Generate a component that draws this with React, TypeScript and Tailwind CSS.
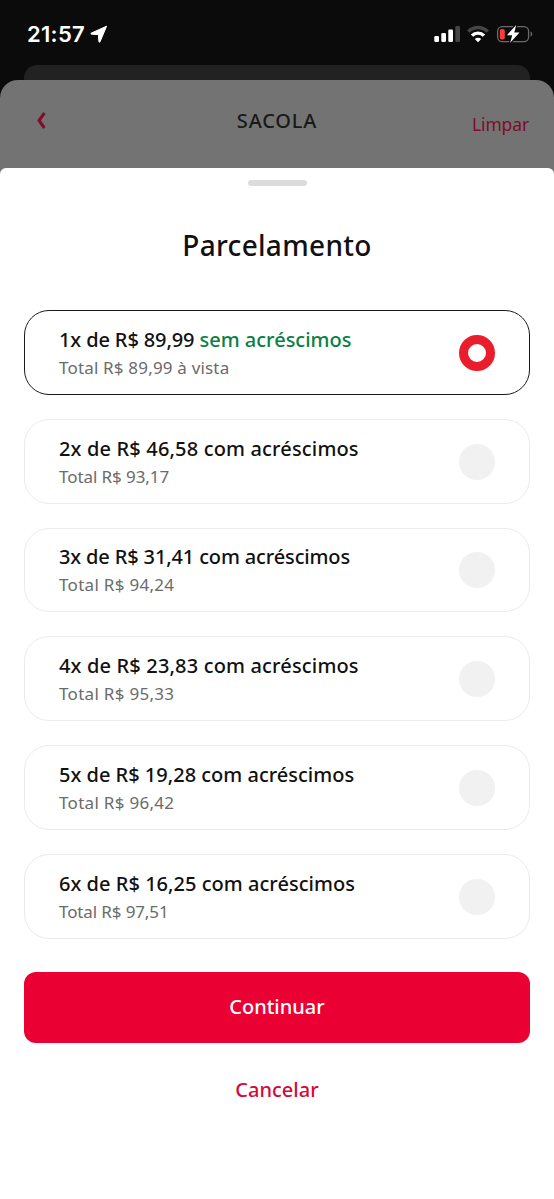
const installments = [
  { price: "1x de R$ 89,99", note: "sem acréscimos", total: "Total R$ 89,99 à vista", free: true, titleTracking: "tracking-[-0.12px]", totalTracking: "tracking-[0.18px]" },
  { price: "2x de R$ 46,58", note: "com acréscimos", total: "Total R$ 93,17", titleTracking: "tracking-[0.16px]", totalTracking: "tracking-[-0.08px]" },
  { price: "3x de R$ 31,41", note: "com acréscimos", total: "Total R$ 94,24", titleTracking: "tracking-[-0.14px]", totalTracking: "tracking-[0.3px]" },
  { price: "4x de R$ 23,83", note: "com acréscimos", total: "Total R$ 95,33", titleTracking: "tracking-[0.16px]", totalTracking: "tracking-[0.3px]" },
  { price: "5x de R$ 19,28", note: "com acréscimos", total: "Total R$ 96,42", titleTracking: "tracking-normal", totalTracking: "tracking-[0.3px]" },
  { price: "6x de R$ 16,25", note: "com acréscimos", total: "Total R$ 97,51", titleTracking: "tracking-[0.03px]", totalTracking: "tracking-[-0.12px]" },
];

const StatusBar = () => (
  <div className="flex h-[65px] items-start justify-between pl-[27px] pr-[20px]">
    <div className="flex pt-[20px] font-['Inter',sans-serif] text-[22px] leading-[28px] font-semibold text-white">
      <span className="tracking-[0.3px]">21:57</span>
      <svg width="18" height="18" viewBox="0 0 18 18" className="mt-[5px] ml-[5px]">
        <path
          d="M16.6 1.2 1.3 8.1c-.7.4-.5 1 .2 1.1l6.9.4.5 7c.1.8.8.9 1.1.2z"
          fill="#fff"
          stroke="#fff"
          strokeWidth="1"
          strokeLinejoin="round"
        />
      </svg>
    </div>
    <svg width="100" height="20" viewBox="0 0 100 20" className="mt-[24px]">
      {/* Signal */}
      <rect x="0.3" y="12" width="4.7" height="6" rx="1.2" fill="#fff" />
      <rect x="7.3" y="9" width="4.7" height="9" rx="1.2" fill="#fff" />
      <rect x="14.3" y="5.5" width="4.7" height="12.5" rx="1.2" fill="#fff" />
      <rect x="21.3" y="2" width="4.7" height="16" rx="1.2" fill="#454545" />
      {/* Wi-Fi */}
      <g fill="none" strokeWidth="3.4">
        <path d="M34.3 7.6a13.7 13.7 0 0 1 19.4 0" stroke="#454545" />
        <path d="M38 11.6a8.5 8.5 0 0 1 12 0" stroke="#fff" />
      </g>
      <path d="m44 18.2-3.2-3.1a4.5 4.5 0 0 1 6.4 0z" fill="#fff" />
      {/* Battery */}
      <rect x="63.6" y="2.6" width="31" height="15" rx="4.6" fill="none" stroke="#6b6b6b" strokeWidth="1.3" />
      <path d="M96.6 7.5c2.2.8 2.2 4.4 0 5.2z" fill="#6b6b6b" />
      <rect x="65.8" y="5" width="5" height="10.4" rx="2" fill="#ff3b37" />
      <path
        d="M82.2 1 73 11.2h5.2l-2 7.6L85.5 8.4h-5.2z"
        fill="#fff"
        stroke="#0b0b0b"
        strokeWidth="2.4"
        strokeLinejoin="round"
        paintOrder="stroke"
      />
    </svg>
  </div>
);

const BagHeader = () => (
  <div className="flex h-[96px] items-start justify-between rounded-t-[18px] bg-[#737373] px-[25px]">
    <div className="w-[80px] pt-[31px] pl-[11px]">
      <svg width="10" height="19" viewBox="0 0 10 19">
        <path d="M8.4 2 3 9.5 8.4 17" fill="none" stroke="#7f0d2b" strokeWidth="3" />
      </svg>
    </div>
    <h2 className="pt-[27px] text-[20px] leading-[28px] font-medium tracking-[0.8px] text-[#191919]">SACOLA</h2>
    <button className="w-[80px] pt-[30px] text-right text-[17.5px] leading-[28px] tracking-[-0.15px] text-[#7f0d2b]">
      Limpar
    </button>
  </div>
);

const Option = ({ item, selected }: { item: (typeof installments)[number]; selected: boolean }) => (
  <li
    className={`flex h-[84.8px] items-center justify-between rounded-[25px] border-[1.5px] pr-[34px] pl-[34px] ${
      selected ? "border-[#1a1a1a]" : "border-[#ebebeb]"
    }`}
  >
    <div className="pt-[3px] whitespace-nowrap">
      <p className={`text-[20px] leading-[28px] font-medium text-[#111] ${item.titleTracking}`}>
        {item.price} <span className={item.free ? "tracking-normal text-[#087f43]" : ""}>{item.note}</span>
      </p>
      <p className={`text-[17px] leading-[28px] text-[#6b6b6b] ${item.totalTracking}`}>{item.total}</p>
    </div>
    <span
      className={`mt-px size-9 rounded-full ${
        selected ? "border-[9px] border-[#ea1d2c] bg-white" : "bg-[#f1f1f1]"
      }`}
    />
  </li>
);

const App = () => {
  return (
    <div className="h-[1199px] w-[554px] overflow-hidden bg-[#0b0b0b] font-['Noto_Sans',sans-serif]">
      <StatusBar />

      {/* Stacked sheets behind the modal */}
      <div className="mx-6 h-[15px] rounded-t-[13px] bg-[#222]" />
      <BagHeader />

      {/* Installments sheet */}
      <main className="relative -mt-2 flex h-[1031px] flex-col items-center rounded-t-[6px] bg-white px-6">
        <div className="mt-[12px] h-[6px] w-[59px] rounded-full bg-[#dcdcdc]" />
        <h1 className="mt-[39px] text-[28px] leading-[40px] font-medium tracking-[0.3px] text-[#111]">
          Parcelamento
        </h1>

        <ul className="mt-[45px] flex w-full flex-col gap-6">
          {installments.map((item, i) => (
            <Option key={item.price} item={item} selected={i === 0} />
          ))}
        </ul>

        <button className="mt-[33px] h-[71px] w-full rounded-[12px] bg-[#eb0033] text-[20px] font-medium text-white">
          Continuar
        </button>
        <button className="mt-[33px] text-[20px] leading-[28px] font-medium text-[#d50938]">Cancelar</button>
      </main>
    </div>
  );
};

export default App;
